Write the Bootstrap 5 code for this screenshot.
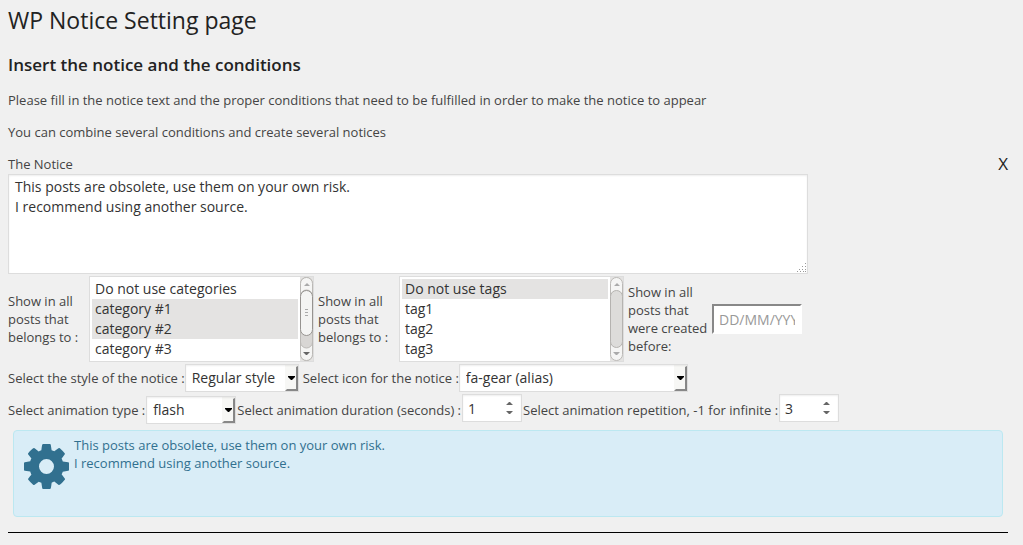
<!DOCTYPE html>
<html lang="en">
<head>
<meta charset="utf-8">
<meta name="viewport" content="width=device-width, initial-scale=1">
<title>WP Notice Setting page</title>
<link href="https://cdn.jsdelivr.net/npm/bootstrap@5.3.0/dist/css/bootstrap.min.css" rel="stylesheet">
<style>
body { background: #f0f0f0; color: #444; font: 13px/18px "Open Sans", sans-serif; }
.settings { padding: 5px 15px 12px 8px; }
.settings h1 { font-size: 23px; line-height: 30px; font-weight: 400; color: #222; margin: 0 0 19px; }
.settings h2 { font-size: 17px; line-height: 22px; font-weight: 600; color: #222; margin: 0 0 15px; }
.settings p { margin: 0 0 14px; }
.remove { font-size: 17px; line-height: 18px; color: #222; background: none; border: 0; padding: 0; }
.field { border: 1px solid #ddd; border-radius: 0; background-color: #fff; color: #333;
  font-size: 14px; line-height: 20px; box-shadow: inset 0 1px 2px rgba(0,0,0,.07); outline: 0; }
textarea.field { display: block; width: 80%; height: 100px; padding: 2px 6px; margin-top: 1px; resize: none; overflow: hidden;
  background: #fff url("data:image/svg+xml,%3Csvg xmlns='http://www.w3.org/2000/svg' width='10' height='10' fill='%23999'%3E%3Cpath d='M8 0h1v1H8zM8 3h1v1H8zM5 3h1v1H5zM8 6h1v1H8zM5 6h1v1H5zM2 6h1v1H2zM8 8h1v1H8zM6 8h1v1H6zM3 8h1v1H3zM0 8h1v1H0z'/%3E%3C/svg%3E") no-repeat right bottom; }
.conditions { margin: 2px 0; }
.line-two { margin-bottom: 2px; }
.line-three { gap: 1px; }
.listbox { width: 225px; height: 86px; border: 1px solid #ddd; background: #fff; padding: 0; }
.listbox select { border: 0; padding: 2px; outline: 0; width: 210px; height: 84px; overflow: hidden; scrollbar-width: none;
  font-size: 14px; line-height: 20px; color: #333; background: #fff; }
.listbox select::-webkit-scrollbar { display: none; }
.listbox option { padding: 0 3px; height: 20px; min-height: 20px; line-height: 20px; color: #333; }
.listbox option:checked { background: #e4e3e2 linear-gradient(#e4e3e2, #e4e3e2); color: #333; }
.narrow-label { width: 77px; margin-right: 4px; }
.date-label { width: 80px; margin-right: 4px; }
.date-field { width: 90px; height: 30px; border: 2px solid #fff; border-top-color: #888; border-left-color: #888; padding: 3px 5px;
  font-size: 14px; line-height: 20px; color: #333; background: #fff; outline: 0; }
.date-field::placeholder { color: #999; opacity: 1; }
.drop { appearance: none; height: 28px; padding: 0 16px 0 6px;
  background: #fff url("data:image/svg+xml,%3Csvg xmlns='http://www.w3.org/2000/svg' width='13' height='26'%3E%3Cpath d='M0 0h13v26H0z' fill='%23f7f7f5'/%3E%3Cpath d='M0 26l2-2h9V2l2-1v25z' fill='%23888'/%3E%3Cpath d='M3 11h7v1L7 15H6L3 12z'/%3E%3C/svg%3E") no-repeat right top; }
.num { appearance: textfield; -moz-appearance: textfield; width: 60px; height: 28px; padding: 0 5px; margin-bottom: 4px;
  background: #fff url("data:image/svg+xml,%3Csvg xmlns='http://www.w3.org/2000/svg' width='7' height='12' fill='%23666'%3E%3Cpath d='M0 3L3 0h1l3 3zM0 9h7l-3 3H3z'/%3E%3C/svg%3E") no-repeat right 8px center; }
.num::-webkit-inner-spin-button { -webkit-appearance: none; margin: 0; }
.w-style { width: 114px; } .w-icon { width: 229px; } .w-anim { width: 90px; }
.notice { margin: 4px 5px 15px; padding: 5px 10px 17px; min-height: 87px; background: #d9edf7; border: 1px solid #bce8f1; border-radius: 4px; color: #31708f; }
.notice svg { margin: 8px 5px 0 0; }
.rule { border-top: 1px solid #000; }
</style>
</head>
<body>
<main class="settings">
  <h1>WP Notice Setting page</h1>
  <h2>Insert the notice and the conditions</h2>
  <p>Please fill in the notice text and the proper conditions that need to be fulfilled in order to make the notice to appear</p>
  <p>You can combine several conditions and create several notices</p>
  <form>
    <div class="d-flex justify-content-between align-items-start">
      <label for="notice-text">The Notice</label>
      <button type="button" class="remove">X</button>
    </div>
    <textarea id="notice-text" class="field">This posts are obsolete, use them on your own risk.
I recommend using another source.</textarea>

    <div class="d-flex align-items-center conditions">
      <label class="narrow-label" for="cats">Show in all posts that belongs to :</label>
      <div class="listbox d-flex">
        <select id="cats" multiple size="4">
          <option>Do not use categories</option>
          <option selected>category #1</option>
          <option selected>category #2</option>
          <option>category #3</option>
        </select>
        <svg width="13" height="84" viewBox="0 0 13 84" aria-hidden="true">
          <rect width="13" height="84" fill="#e4e3e2"/>
          <rect x=".5" y=".5" width="12" height="83" rx="6" fill="#d8d6d4" stroke="#bbb9b6"/>
          <path d="M.5 19V6.500a6 6 0 0 1 12 0V19a6 6 0 0 0-12 0zM.5 65v12.500a6 6 0 0 0 12 0V65a6 6 0 0 1-12 0z" fill="#f5f5f4" stroke="#bbb9b6"/>
          <rect x=".5" y="13.500" width="12" height="45" rx="6" fill="#f4f4f3" stroke="#969390"/>
          <path d="M5 32.500h3M5 35.500h3M5 38.500h3" stroke="#aaa"/>
          <path d="M4 9h6L7 6z" fill="#aaa"/><path d="M3 75h7l-3 3H6z" fill="#666"/>
        </svg>
      </div>
      <label class="narrow-label ms-1" for="tags">Show in all posts that belongs to :</label>
      <div class="listbox d-flex">
        <select id="tags" multiple size="4">
          <option selected>Do not use tags</option>
          <option>tag1</option>
          <option>tag2</option>
          <option>tag3</option>
        </select>
        <svg width="13" height="84" viewBox="0 0 13 84" aria-hidden="true">
          <rect width="13" height="84" fill="#e4e3e2"/>
          <rect x=".5" y=".5" width="12" height="83" rx="6" fill="#f5f5f4" stroke="#bbb9b6"/>
          <rect x=".5" y="13.500" width="12" height="57" rx="6" fill="#dddcda" stroke="#b5b3b0"/>
          <path d="M4 9h6L7 6zM3 75h7l-3 3H6z" fill="#aaa"/>
        </svg>
      </div>
      <label class="date-label ms-1" for="before">Show in all posts that were created before:</label>
      <input id="before" class="date-field" type="text" placeholder="DD/MM/YYYY">
    </div>

    <div class="d-flex align-items-center line-two">
      <label for="style">Select the style of the notice :</label>
      <select id="style" class="field drop w-style"><option>Regular style</option></select>
      <label for="icon" class="ms-1">Select icon for the notice :</label>
      <select id="icon" class="field drop w-icon"><option>fa-gear (alias)</option></select>
    </div>

    <div class="d-flex align-items-center line-three">
      <label for="anim">Select animation type :</label>
      <select id="anim" class="field drop w-anim"><option>flash</option></select>
      <label for="dur">Select animation duration (seconds) :</label>
      <input id="dur" class="field num" type="number" value="1">
      <label for="rep">Select animation repetition, -1 for infinite :</label>
      <input id="rep" class="field num" type="number" value="3">
    </div>
  </form>
  <div class="notice d-flex align-items-start" role="alert">
    <svg width="45" height="45" viewBox="0 0 1536 1536" fill="#31708f" class="flex-shrink-0" aria-hidden="true"><path d="M1024 768q0-106-75-181t-181-75-181 75-75 181 75 181 181 75 181-75 75-181zm512-109v222q0 12-8 23t-20 13l-185 28q-19 54-39 91 35 50 107 138 10 12 10 25t-9 23q-27 37-99 108t-94 71q-12 0-26-9l-138-108q-44 23-91 38-16 136-29 186-7 28-36 28h-222q-14 0-24.500-8.500t-11.500-21.500l-28-184q-49-16-90-37l-141 107q-10 9-25 9-14 0-25-11-126-114-165-168-7-10-7-23 0-12 8-23 15-21 51-66.500t54-70.500q-27-50-41-99l-183-27q-13-2-21-12.500t-8-23.500v-222q0-12 8-23t19-13l186-28q14-46 39-92-40-57-107-138-10-12-10-24 0-10 9-23 26-36 98.500-107.500t94.500-71.500q13 0 26 10l138 107q44-23 91-38 16-136 29-186 7-28 36-28h222q14 0 24.500 8.500t11.500 21.500l28 184q49 16 90 37l142-107q9-9 24-9 13 0 25 10 129 119 165 170 7 8 7 22 0 12-8 23-15 21-51 66.500t-54 70.500q26 50 41 98l183 28q13 2 21 12.500t8 23.500z"/></svg>
    <div>This posts are obsolete, use them on your own risk.<br>I recommend using another source.</div>
  </div>
  <div class="rule"></div>
</main>
<script src="https://cdn.jsdelivr.net/npm/bootstrap@5.3.0/dist/js/bootstrap.bundle.min.js"></script>
</body>
</html>
